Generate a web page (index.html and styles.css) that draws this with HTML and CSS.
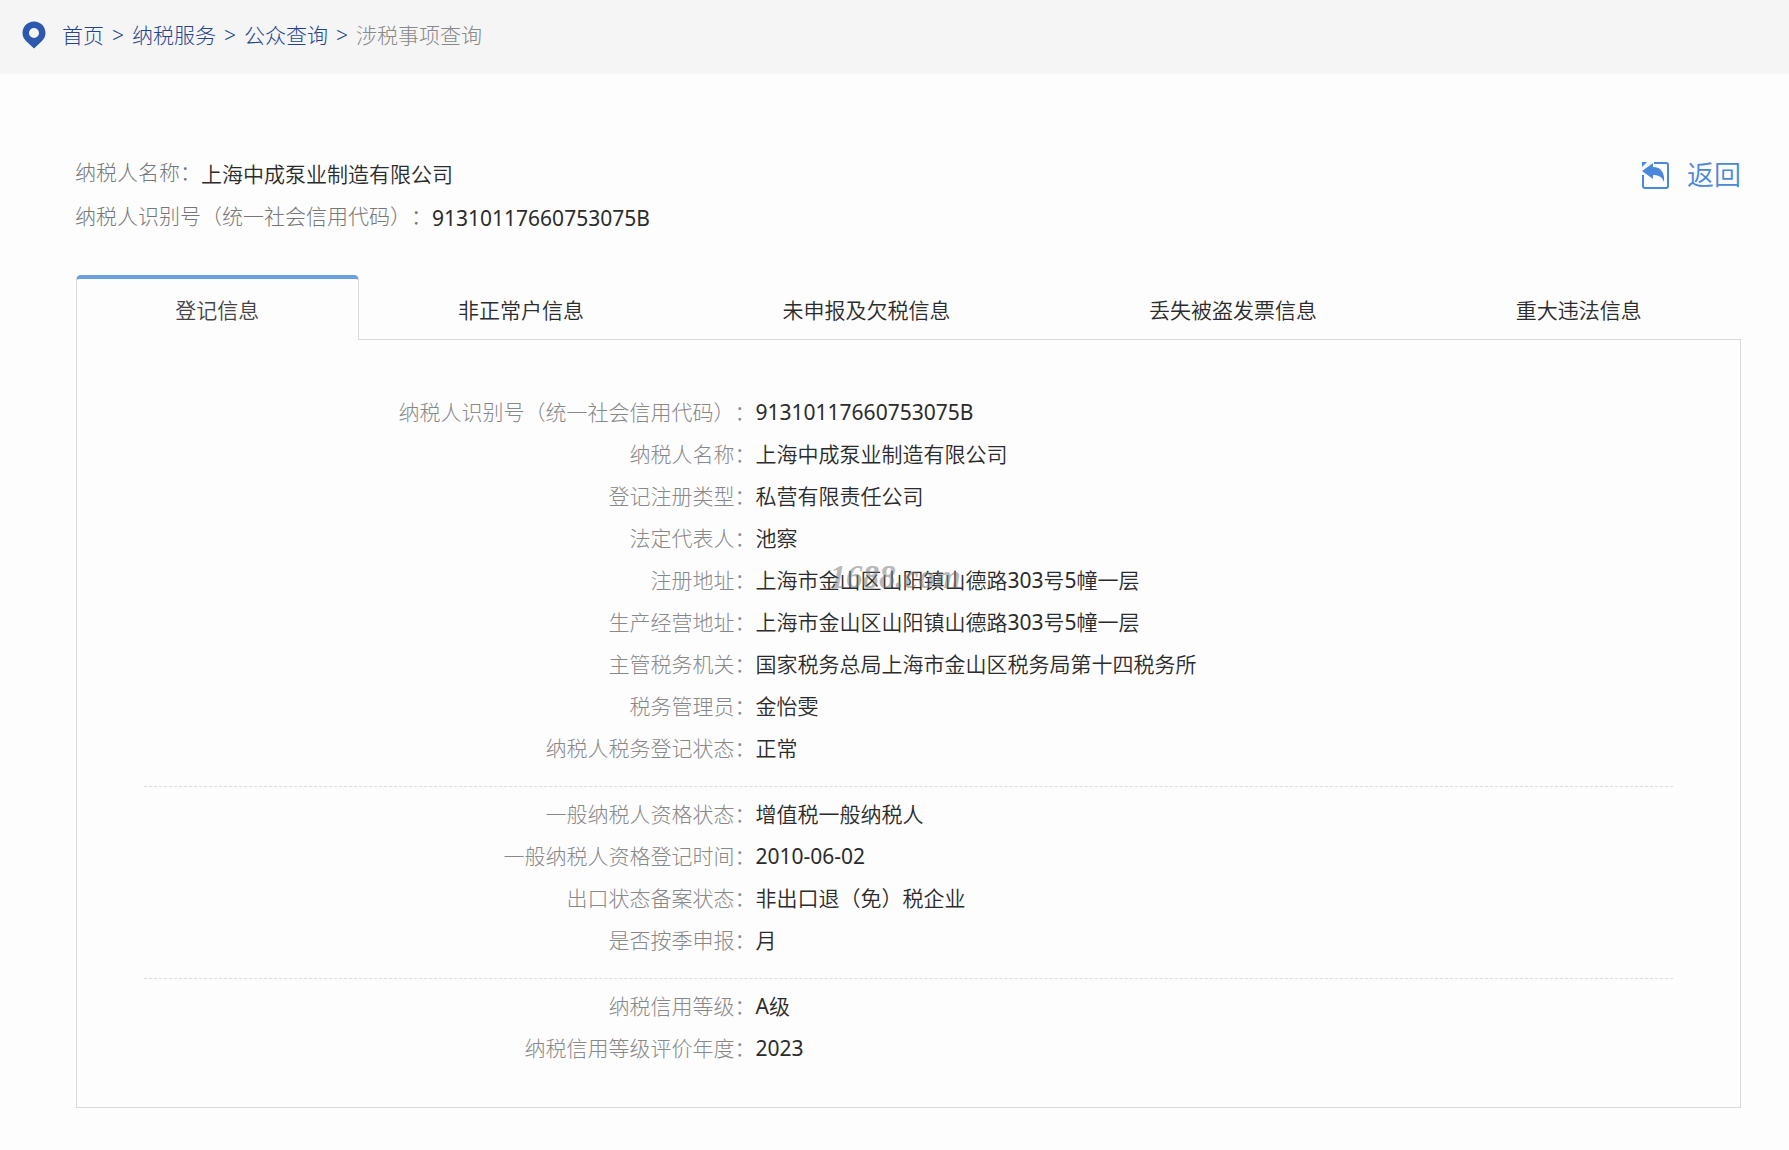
FILE: index.html
```html
<!DOCTYPE html>
<html lang="zh-CN">
<head>
    <meta charset="UTF-8">
    <title>涉税事项查询</title>
    <link rel="stylesheet" href="styles.css">
</head>
<body>
<nav class="crumbs">
    <svg class="pin" width="24" height="28" viewBox="0 0 24 28"><path fill="#2c58ae" fill-rule="evenodd" d="M12 0.500C5.500.500.500 5.500.500 12c0 3.500 1.500 6 4 8.500l7.500 7 7.500-7c2.500-2.500 4-5 4-8.500C23.500 5.500 18.500.500 12 .500zm0 6.500a5 5 0 1 1 0 10 5 5 0 0 1 0-10z"/></svg>
    <a href="#">首页</a>
    <span>&gt;</span>
    <a href="#">纳税服务</a>
    <span>&gt;</span>
    <a href="#">公众查询</a>
    <span>&gt;</span>
    <span class="current">涉税事项查询</span>
</nav>

<main class="content">
    <div class="summary">
        <dl class="taxpayer">
            <div>
                <dt>纳税人名称：</dt>
                <dd>上海中成泵业制造有限公司</dd>
            </div>
            <div>
                <dt>纳税人识别号（统一社会信用代码）：</dt>
                <dd class="num">91310117660753075B</dd>
            </div>
        </dl>
        <a class="back" href="#">
            <svg width="27" height="27" viewBox="0 0 27 27">
                <path fill="none" stroke="#4a88dc" stroke-width="2" d="M12 1h12a2 2 0 0 1 2 2v21a2 2 0 0 1-2 2H3a2 2 0 0 1-2-2V13"/>
                <path fill="#4a88dc" d="M0 0h5L0 5zM0 9 11 1v4c8 0 12 6 11 15-2-5-5-7-11-7v4z"/>
            </svg>
            返回
        </a>
    </div>

    <div class="tabs">
        <button class="tab active">登记信息</button>
        <button class="tab">非正常户信息</button>
        <button class="tab">未申报及欠税信息</button>
        <button class="tab">丢失被盗发票信息</button>
        <button class="tab">重大违法信息</button>
    </div>

    <div class="panel">
        <dl class="group">
            <dt>纳税人识别号（统一社会信用代码）：</dt><dd class="num">91310117660753075B</dd>
            <dt>纳税人名称：</dt><dd>上海中成泵业制造有限公司</dd>
            <dt>登记注册类型：</dt><dd>私营有限责任公司</dd>
            <dt>法定代表人：</dt><dd>池察</dd>
            <dt>注册地址：</dt><dd class="marked">上海市金山区山阳镇山德路<span class="num">303</span>号<span class="num">5</span>幢一层<span class="watermark">1688.com</span></dd>
            <dt>生产经营地址：</dt><dd>上海市金山区山阳镇山德路<span class="num">303</span>号<span class="num">5</span>幢一层</dd>
            <dt>主管税务机关：</dt><dd>国家税务总局上海市金山区税务局第十四税务所</dd>
            <dt>税务管理员：</dt><dd>金怡雯</dd>
            <dt>纳税人税务登记状态：</dt><dd>正常</dd>
        </dl>
        <dl class="group">
            <dt>一般纳税人资格状态：</dt><dd>增值税一般纳税人</dd>
            <dt>一般纳税人资格登记时间：</dt><dd class="num">2010-06-02</dd>
            <dt>出口状态备案状态：</dt><dd>非出口退（免）税企业</dd>
            <dt>是否按季申报：</dt><dd>月</dd>
        </dl>
        <dl class="group">
            <dt>纳税信用等级：</dt><dd><span class="num">A</span>级</dd>
            <dt>纳税信用等级评价年度：</dt><dd class="num">2023</dd>
        </dl>
    </div>
</main>
</body>
</html>
```
FILE: styles.css
```css
*{
    box-sizing: border-box;
}
body{
    margin: 0;
    background: #fdfdfd;
    color: #2b2b2b;
    font-family: "Noto Sans", "Noto Sans CJK SC", sans-serif;
    font-size: 21px;
    font-weight: 300;
    line-height: 42px;
    text-spacing-trim: space-all;
}
a{
    text-decoration: none;
}
dl, dd{
    margin: 0;
}
.crumbs{
    display: flex;
    align-items: center;
    gap: 8px;
    height: 74px;
    padding: 0 22px 4px;
    background: #f5f5f5;
    color: #1f4590;
}
.crumbs a{
    color: #1f4590;
}
.crumbs .current{
    color: #888;
}
.pin{
    margin-right: 8px;
}
.content{
    padding: 77px 48px 42px 76px;
}
.summary{
    display: flex;
    justify-content: space-between;
    align-items: flex-start;
}
.taxpayer{
    margin-left: -1px;
}
.taxpayer > div{
    display: flex;
    height: 44px;
}
.taxpayer dt{
    color: #777;
}
.taxpayer dd{
    padding-top: 2px;
}
dd, .tab{
    font-weight: 350;
}
.num{
    font-weight: 400;
}
.back{
    display: flex;
    align-items: center;
    gap: 18px;
    padding-top: 3px;
    color: #4a88dc;
    font-size: 27px;
    font-weight: 350;
}
.tabs{
    display: flex;
    margin-top: 36px;
}
.tab{
    flex: 1 1 auto;
    height: 65px;
    padding: 3px 1px 0;
    border: 0;
    border-bottom: 1px solid #d9d9d9;
    background: none;
    color: #2b2b2b;
    font-family: inherit;
    font-size: 21px;
    cursor: pointer;
}
.tab.active{
    padding: 0 0 2px;
    border: 1px solid #d9d9d9;
    border-top: 4px solid #69a0de;
    border-bottom: 0;
    border-radius: 5px 5px 0 0;
    color: #444;
}
.panel{
    padding: 51px 4% 38px;
    border: 1px solid #d9d9d9;
    border-top: 0;
}
.group{
    display: grid;
    grid-template-columns: 40% 60%;
}
.group + .group{
    margin-top: 17px;
    padding-top: 6px;
    border-top: 1px dashed #ddd;
}
.group dt{
    color: #888;
    text-align: right;
}
.marked{
    position: relative;
}
.watermark{
    position: absolute;
    left: 74px;
    top: -3px;
    color: #777;
    font-family: "Liberation Serif", serif;
    font-size: 33px;
    font-style: italic;
    font-weight: bold;
    opacity: 0.5;
}
```
